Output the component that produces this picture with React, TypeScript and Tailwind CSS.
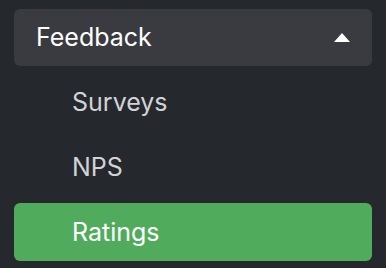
import { useState } from 'react';

// Collapsible sidebar group: "Feedback" with sub-items
const items = ['Surveys', 'NPS', 'Ratings'];

export default function App() {
  const [active, setActive] = useState('Ratings');
  const [open, setOpen] = useState(true);

  return (
    <div
      className="w-[386px] h-[268px] bg-[#25282d] px-[14px] pt-[9px] flex flex-col gap-[7px] overflow-hidden"
      style={{ fontFamily: 'Inter, "Noto Sans", sans-serif' }}
    >
      {/* 그룹 헤더 */}
      <button
        onClick={() => setOpen((v) => !v)}
        className="h-[57px] w-full flex items-center justify-between rounded-[6px] bg-[#3a3b40] pl-[22px] pr-[22px] text-[25px] font-normal text-white"
      >
        <span className="leading-none">Feedback</span>
        <svg width="16" height="9" viewBox="0 0 16 9" className={open ? '' : 'rotate-180'}>
          <polygon points="8,0 16,9 0,9" fill="#ffffff" />
        </svg>
      </button>

      {/* 하위 메뉴 */}
      {open &&
        items.map((name) => (
          <div
            key={name}
            onClick={() => setActive(name)}
            className={`h-[58px] w-full flex items-center rounded-[6px] pl-[58px] text-[25px] font-normal cursor-pointer ${
              active === name ? 'bg-[#51ab5d] text-white' : 'text-[#d2d3d5]'
            }`}
          >
            <span className="leading-none">{name}</span>
          </div>
        ))}
    </div>
  );
}
